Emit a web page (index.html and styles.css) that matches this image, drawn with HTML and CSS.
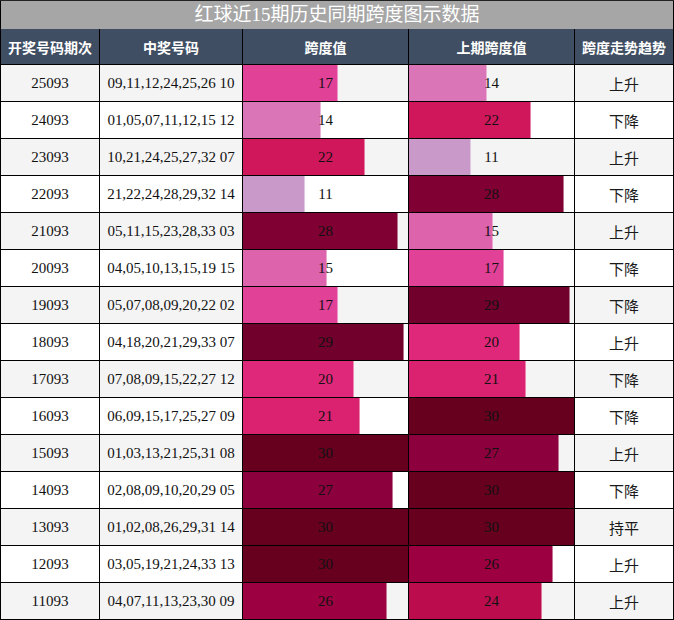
FILE: index.html
```html
<!DOCTYPE html>
<html lang="zh">
<head>
<meta charset="utf-8">
<title>红球近15期历史同期跨度图示数据</title>
<link rel="stylesheet" href="styles.css">
</head>
<body>
<div class="wrap">
  <div class="title">红球近15期历史同期跨度图示数据</div>
  <div class="grid">
    <div class="hd">开奖号码期次</div><div class="hd">中奖号码</div><div class="hd">跨度值</div><div class="hd">上期跨度值</div><div class="hd">跨度走势趋势</div>

    <div class="c odd">25093</div><div class="c odd">09,11,12,24,25,26 10</div>
    <div class="c odd b"><span class="bar v17" style="width:56.667%"></span><span class="n">17</span></div>
    <div class="c odd b"><span class="bar v14" style="width:46.667%"></span><span class="n">14</span></div>
    <div class="c odd t">上升</div>

    <div class="c">24093</div><div class="c">01,05,07,11,12,15 12</div>
    <div class="c b"><span class="bar v14" style="width:46.667%"></span><span class="n">14</span></div>
    <div class="c b"><span class="bar v22" style="width:73.333%"></span><span class="n">22</span></div>
    <div class="c t">下降</div>

    <div class="c odd">23093</div><div class="c odd">10,21,24,25,27,32 07</div>
    <div class="c odd b"><span class="bar v22" style="width:73.333%"></span><span class="n">22</span></div>
    <div class="c odd b"><span class="bar v11" style="width:36.667%"></span><span class="n">11</span></div>
    <div class="c odd t">上升</div>

    <div class="c">22093</div><div class="c">21,22,24,28,29,32 14</div>
    <div class="c b"><span class="bar v11" style="width:36.667%"></span><span class="n">11</span></div>
    <div class="c b"><span class="bar v28" style="width:93.333%"></span><span class="n">28</span></div>
    <div class="c t">下降</div>

    <div class="c odd">21093</div><div class="c odd">05,11,15,23,28,33 03</div>
    <div class="c odd b"><span class="bar v28" style="width:93.333%"></span><span class="n">28</span></div>
    <div class="c odd b"><span class="bar v15" style="width:50%"></span><span class="n">15</span></div>
    <div class="c odd t">上升</div>

    <div class="c">20093</div><div class="c">04,05,10,13,15,19 15</div>
    <div class="c b"><span class="bar v15" style="width:50%"></span><span class="n">15</span></div>
    <div class="c b"><span class="bar v17" style="width:56.667%"></span><span class="n">17</span></div>
    <div class="c t">下降</div>

    <div class="c odd">19093</div><div class="c odd">05,07,08,09,20,22 02</div>
    <div class="c odd b"><span class="bar v17" style="width:56.667%"></span><span class="n">17</span></div>
    <div class="c odd b"><span class="bar v29" style="width:96.667%"></span><span class="n">29</span></div>
    <div class="c odd t">下降</div>

    <div class="c">18093</div><div class="c">04,18,20,21,29,33 07</div>
    <div class="c b"><span class="bar v29" style="width:96.667%"></span><span class="n">29</span></div>
    <div class="c b"><span class="bar v20" style="width:66.667%"></span><span class="n">20</span></div>
    <div class="c t">上升</div>

    <div class="c odd">17093</div><div class="c odd">07,08,09,15,22,27 12</div>
    <div class="c odd b"><span class="bar v20" style="width:66.667%"></span><span class="n">20</span></div>
    <div class="c odd b"><span class="bar v21" style="width:70%"></span><span class="n">21</span></div>
    <div class="c odd t">下降</div>

    <div class="c">16093</div><div class="c">06,09,15,17,25,27 09</div>
    <div class="c b"><span class="bar v21" style="width:70%"></span><span class="n">21</span></div>
    <div class="c b"><span class="bar v30" style="width:100%"></span><span class="n">30</span></div>
    <div class="c t">下降</div>

    <div class="c odd">15093</div><div class="c odd">01,03,13,21,25,31 08</div>
    <div class="c odd b"><span class="bar v30" style="width:100%"></span><span class="n">30</span></div>
    <div class="c odd b"><span class="bar v27" style="width:90%"></span><span class="n">27</span></div>
    <div class="c odd t">上升</div>

    <div class="c">14093</div><div class="c">02,08,09,10,20,29 05</div>
    <div class="c b"><span class="bar v27" style="width:90%"></span><span class="n">27</span></div>
    <div class="c b"><span class="bar v30" style="width:100%"></span><span class="n">30</span></div>
    <div class="c t">下降</div>

    <div class="c odd">13093</div><div class="c odd">01,02,08,26,29,31 14</div>
    <div class="c odd b"><span class="bar v30" style="width:100%"></span><span class="n">30</span></div>
    <div class="c odd b"><span class="bar v30" style="width:100%"></span><span class="n">30</span></div>
    <div class="c odd t">持平</div>

    <div class="c">12093</div><div class="c">03,05,19,21,24,33 13</div>
    <div class="c b"><span class="bar v30" style="width:100%"></span><span class="n">30</span></div>
    <div class="c b"><span class="bar v26" style="width:86.667%"></span><span class="n">26</span></div>
    <div class="c t">上升</div>

    <div class="c odd">11093</div><div class="c odd">04,07,11,13,23,30 09</div>
    <div class="c odd b"><span class="bar v26" style="width:86.667%"></span><span class="n">26</span></div>
    <div class="c odd b"><span class="bar v24" style="width:80%"></span><span class="n">24</span></div>
    <div class="c odd t">上升</div>
  </div>
</div>
</body>
</html>
```

FILE: styles.css
```css
html, body {
  margin: 0;
  padding: 0;
  background: #ffffff;
}
body {
  font-family: "Liberation Serif", "Noto Sans CJK SC", serif;
  color: #111111;
}
.wrap {
  width: 674px;
  background: #000;
  border-top: 1px solid #222;
}
.title {
  height: 28px;
  line-height: 28px;
  background: #a6a6a6;
  color: #ffffff;
  text-align: center;
  font-size: 19px;
  margin: 0 1px;
}
.grid {
  display: grid;
  grid-template-columns: 98px 142px 165px 165px 98px;
  grid-auto-rows: 36px;
  grid-template-rows: 35px;
  gap: 1px;
  padding: 0 1px 1px;
  background: #000;
}
.hd {
  background: #3f4e62;
  color: #ffffff;
  font-family: "Noto Sans CJK SC", sans-serif;
  font-weight: bold;
  font-size: 14px;
  display: flex;
  align-items: center;
  justify-content: center;
}
.c {
  background: #ffffff;
  display: flex;
  align-items: center;
  justify-content: center;
  font-size: 15px;
  white-space: nowrap;
  overflow: hidden;
}
.c.odd {
  background: #f4f4f4;
}
.t {
  font-family: "Noto Sans CJK SC", sans-serif;
  font-size: 15px;
  color: #1a1a1a;
}
.b {
  position: relative;
}
.bar {
  position: absolute;
  left: 0;
  top: 0;
  bottom: 0;
  box-sizing: content-box;
  border-right: 1px solid rgba(255, 255, 255, 0.45);
}
.n {
  position: relative;
}
.v11 { background: #c99ac9; }
.v14 { background: #da75b8; }
.v15 { background: #dc63ac; }
.v17 { background: #e14197; }
.v20 { background: #e0287a; }
.v21 { background: #da2270; }
.v22 { background: #d0175b; }
.v24 { background: #bb0d4e; }
.v26 { background: #9c0040; }
.v27 { background: #8b003d; }
.v28 { background: #800033; }
.v29 { background: #72002c; }
.v30 { background: #67001f; }
```
